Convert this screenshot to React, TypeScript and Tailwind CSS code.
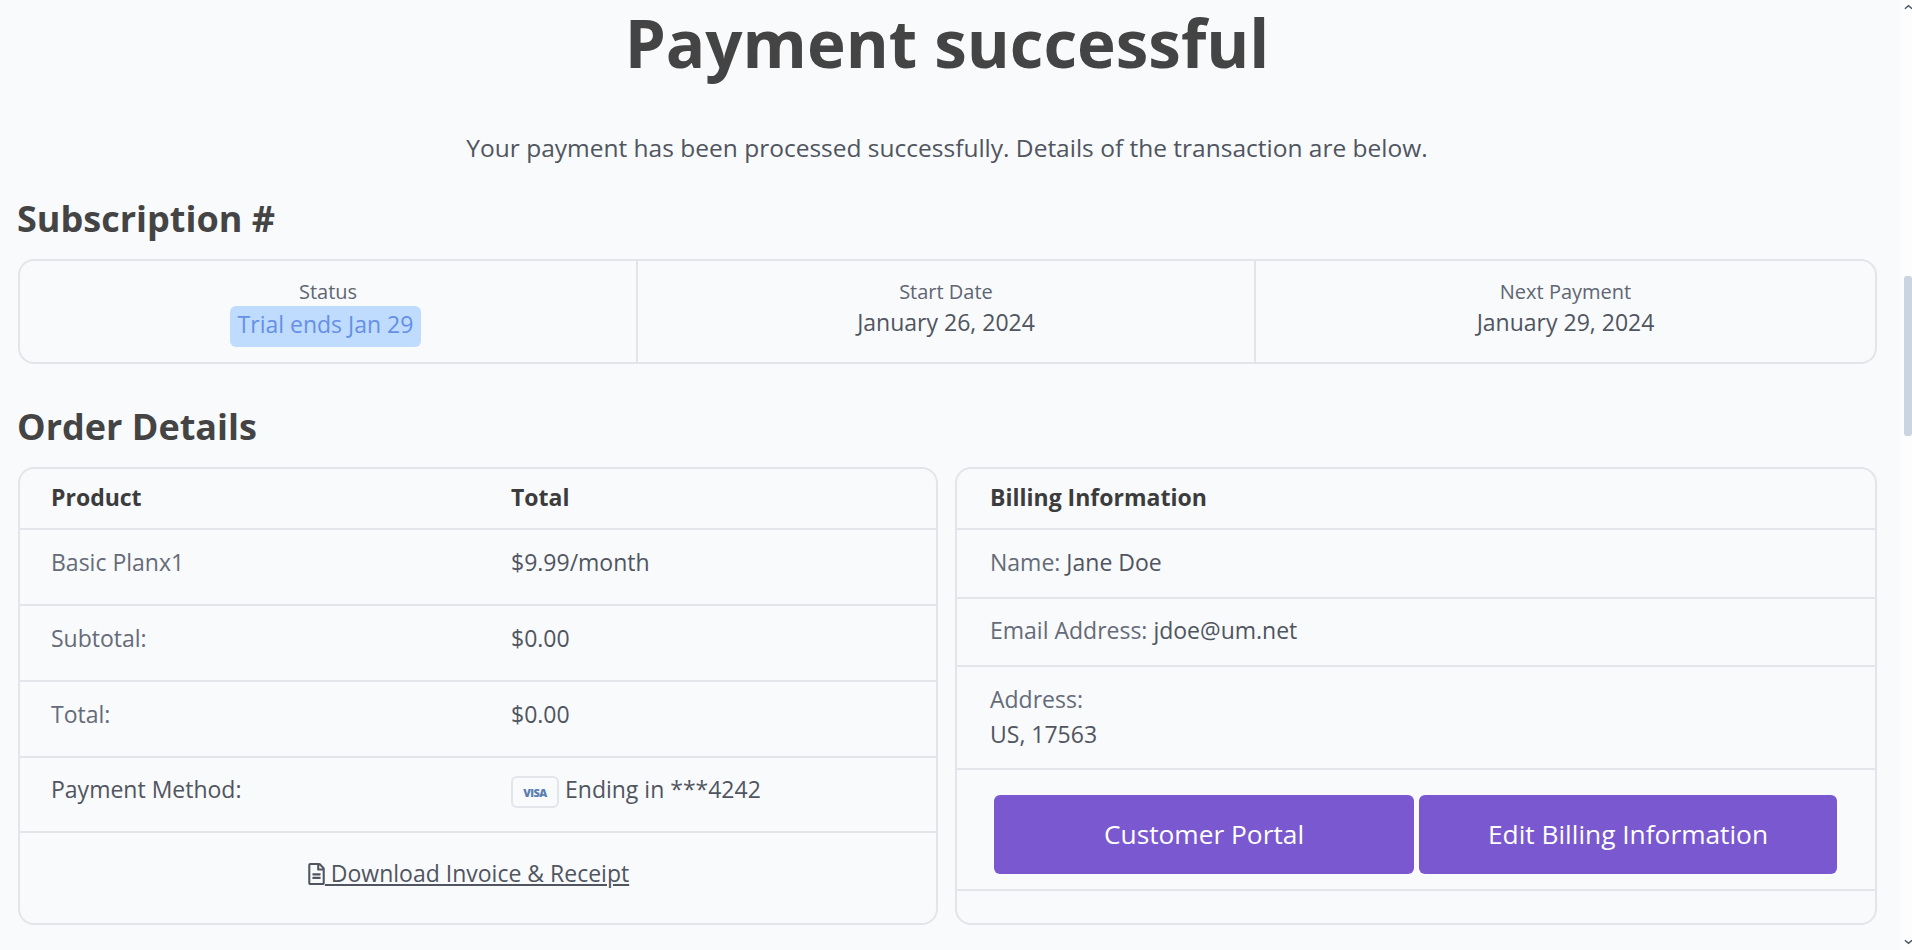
import React from "react";
import { FaRegFileAlt } from "react-icons/fa";

const orderRows = [
  { label: "Basic Planx1", value: "$9.99/month" },
  { label: "Subtotal:", value: "$0.00" },
  { label: "Total:", value: "$0.00" },
];

const summary = [
  { label: "Status", value: "Trial ends Jan 29", cell: "w-[616px]" },
  { label: "Start Date", value: "January 26, 2024", cell: "w-[618px]" },
  { label: "Next Payment", value: "January 29, 2024", cell: "flex-1" },
];

const ScrollArrow = ({ up }: { up?: boolean }) => (
  <svg viewBox="0 0 10 6" className="h-[6px] w-[9px] text-gray-600">
    <path d={up ? "M1 5 L5 1.5 L9 5" : "M1 1 L5 4.5 L9 1"} fill="none" stroke="currentColor" strokeWidth="1.6" />
  </svg>
);

export default function App() {
  return (
    <div className="flex h-[950px] overflow-hidden bg-[#f8fafc] font-['Open_Sans',sans-serif] text-[#50555f]">
      <main className="min-w-0 flex-1 pl-[17px] pr-[23px]">
        <h1 className="mt-[8px] h-[70px] text-center text-[65.5px] leading-[70px] font-bold text-[#444444]">
          Payment successful
        </h1>
        <p className="mt-[54px] text-center text-[24.5px] leading-[32px]">
          Your payment has been processed successfully. Details of the transaction are below.
        </p>
        <h2 className="mt-[31px] text-[36px] leading-[48px] font-bold text-[#444444]">Subscription #</h2>
        <div className="ml-[1px] mt-[16px] flex h-[105px] rounded-[16px] border-2 border-[#e2e5ea]">
          {summary.map((item, i) => (
            <div
              key={item.label}
              className={`${item.cell} flex flex-col items-center pt-[17px] ${i > 0 ? "border-l-2 border-[#e2e5ea]" : ""}`}
            >
              <span className="text-[20px] leading-[27px] text-[#5f6672]">{item.label}</span>
              {i === 0 ? (
                <span className="mr-[5px] mt-[1px] rounded-[6px] bg-[#bfdbfe] px-[8px] pb-[4px] text-[23px] leading-[37px] text-[#6590e6]">
                  {item.value}
                </span>
              ) : (
                <span className="text-[23px] leading-[34px]">{item.value}</span>
              )}
            </div>
          ))}
        </div>
        <h2 className="mt-[39px] text-[36px] leading-[48px] font-bold text-[#444444]">Order Details</h2>
        <div className="ml-[1px] mt-[16px] flex gap-[17px]">
          <section className="h-[458px] w-[920px] rounded-[16px] border-2 border-[#e2e5ea]">
            <div className="grid h-[61px] grid-cols-[460px_1fr] border-b-2 border-[#e2e5ea] pl-[31px] pt-[12px] text-[23px] leading-[32px] font-bold text-[#3c3c3c]">
              <span>Product</span>
              <span>Total</span>
            </div>
            {orderRows.map((row) => (
              <div
                key={row.label}
                className="grid h-[76px] grid-cols-[460px_1fr] border-b-2 border-[#e2e5ea] pl-[31px] pt-[16px] text-[23px] leading-[32px]"
              >
                <span className="text-[#656b78]">{row.label}</span>
                <span>{row.value}</span>
              </div>
            ))}
            <div className="grid h-[75px] grid-cols-[460px_1fr] border-b-2 border-[#e2e5ea] pl-[31px] pt-[15px] text-[23px] leading-[32px]">
              <span>Payment Method:</span>
              <span className="flex items-start">
                <span className="mr-[6px] mt-[3px] flex h-[32px] w-[48px] items-center justify-center rounded-[6px] border-2 border-[#e2e5ea] text-[11px] leading-none font-extrabold tracking-tighter text-[#5b7fb0]">
                  VISA
                </span>
                Ending in ***4242
              </span>
            </div>
            <div className="pr-[19px] pt-[24px] text-center text-[23px] leading-[32px]">
              <a href="#" className="underline">
                <FaRegFileAlt className="inline-block h-[22px] w-[17px] align-[-3px]" /> Download Invoice &amp; Receipt
              </a>
            </div>
          </section>
          <section className="h-[458px] flex-1 rounded-[16px] border-2 border-[#e2e5ea]">
            <div className="h-[61px] border-b-2 border-[#e2e5ea] pl-[33px] pt-[12px] text-[23px] leading-[32px] font-bold text-[#3c3c3c]">
              Billing Information
            </div>
            <div className="h-[69px] border-b-2 border-[#e2e5ea] pl-[33px] pt-[16px] text-[23px] leading-[32px]">
              <span className="text-[#656b78]">Name:</span> Jane Doe
            </div>
            <div className="h-[68px] border-b-2 border-[#e2e5ea] pl-[33px] pt-[15px] text-[23px] leading-[32px]">
              <span className="text-[#656b78]">Email Address:</span> jdoe@um.net
            </div>
            <div className="h-[103px] border-b-2 border-[#e2e5ea] pl-[33px] pt-[15px] text-[23px] leading-[35px]">
              <div className="text-[#656b78]">Address:</div>
              <div>US, 17563</div>
            </div>
            <div className="flex h-[121px] gap-[5px] border-b-2 border-[#e2e5ea] pl-[37px] pt-[25px]">
              <button className="h-[79px] w-[420px] rounded-[6px] bg-[#7a58d0] text-[26.3px] text-white">Customer Portal</button>
              <button className="h-[79px] w-[418px] rounded-[6px] bg-[#7a58d0] text-[26.3px] text-white">Edit Billing Information</button>
            </div>
          </section>
        </div>
      </main>
      <aside className="flex w-[12px] flex-col items-center bg-[#fdfdfe] pl-[4px] pt-[4px]">
        <ScrollArrow up />
        <div className="mt-[266px] h-[160px] w-[8px] rounded-[3px] bg-[#cbd5e1]" />
        <div className="mt-auto pb-[5px]">
          <ScrollArrow />
        </div>
      </aside>
    </div>
  );
}
